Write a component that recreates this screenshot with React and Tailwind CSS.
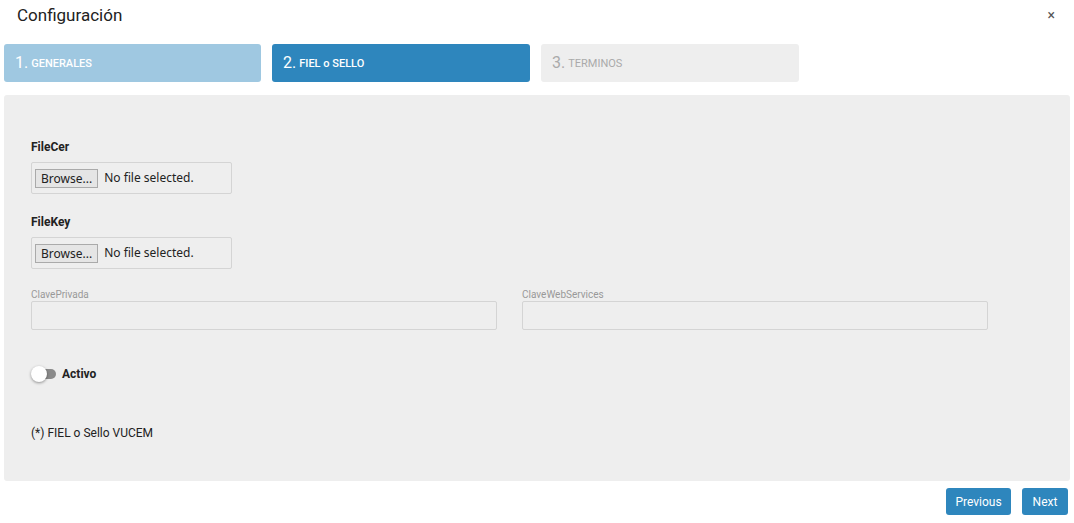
export default function App() {
  const font = { fontFamily: "Roboto, 'Liberation Sans', sans-serif" };
  const FileBox = () => (
    <div className="w-[201px] h-[32px] border border-[#d4d4d4] rounded-[2px] flex items-center pl-[3px] gap-[6px]">
      <span className="h-[19px] px-[5px] border border-[#aaa] bg-[#e5e5e5] text-[12px] leading-[17px] text-[#222]" style={{fontFamily:"'Noto Sans', sans-serif"}}>Browse...</span>
      <span className="text-[12px] text-[#222]" style={{fontFamily:"'Noto Sans', sans-serif"}}>No file selected.</span>
    </div>
  );
  return (
    <div className="w-[1074px] h-[523px] bg-white relative" style={font}>
      <div className="h-[44px] pl-[17px] pt-[3px] text-[17px] text-[#222]">Configuración</div>
      <span className="absolute right-[19px] top-[5px] text-[14px] text-[#555]">×</span>
      <div className="flex gap-[11px] px-[4px]">
        <div className="w-[257px] h-[38px] rounded-[3px] bg-[#9fc8e1] text-white flex items-center pl-[11px]"><span className="text-[16px]">1.</span><span className="text-[11px] font-medium ml-[3px] mt-[3px]">GENERALES</span></div>
        <div className="w-[258px] h-[38px] rounded-[3px] bg-[#2e86bd] text-white flex items-center pl-[11px]"><span className="text-[16px]">2.</span><span className="text-[11px] font-medium ml-[3px] mt-[3px]">FIEL o SELLO</span></div>
        <div className="w-[258px] h-[38px] rounded-[3px] bg-[#eeeeee] text-[#aaa] flex items-center pl-[11px]"><span className="text-[16px]">3.</span><span className="text-[11px] ml-[3px] mt-[3px]">TERMINOS</span></div>
      </div>
      <div className="mx-[4px] mt-[13px] h-[386px] bg-[#eeeeee] rounded-[3px] pl-[27px] pt-[45px]">
        <div className="text-[12px] font-bold text-[#222] leading-[14px]">FileCer</div>
        <div className="mt-[8px]"><FileBox /></div>
        <div className="text-[12px] font-bold text-[#222] leading-[14px] mt-[21px]">FileKey</div>
        <div className="mt-[8px]"><FileBox /></div>
        <div className="flex gap-[25px] mt-[20px]">
          <div>
            <div className="text-[10px] text-[#999] leading-[11px]">ClavePrivada</div>
            <div className="w-[466px] h-[29px] border border-[#d4d4d4] rounded-[2px] mt-[1px]"></div>
          </div>
          <div>
            <div className="text-[10px] text-[#999] leading-[11px]">ClaveWebServices</div>
            <div className="w-[466px] h-[29px] border border-[#d4d4d4] rounded-[2px] mt-[1px]"></div>
          </div>
        </div>
        <div className="flex items-center mt-[35px] gap-[6px]">
          <div className="relative w-[25px] h-[16px]">
            <div className="absolute left-[4px] top-[3px] w-[21px] h-[10px] rounded-full bg-[#8a8a8a]"></div>
            <div className="absolute left-0 top-0 w-[16px] h-[16px] rounded-full bg-white shadow-[0_1px_3px_rgba(0,0,0,0.4)]"></div>
          </div>
          <span className="text-[12px] font-bold text-[#222]">Activo</span>
        </div>
        <div className="text-[12px] text-[#222] mt-[41px]">(*) FIEL o Sello VUCEM</div>
      </div>
      <div className="flex justify-end gap-[11px] pr-[6px] mt-[7px]">
        <button className="w-[65px] h-[27px] rounded-[3px] bg-[#2e86bd] text-white text-[12px]">Previous</button>
        <button className="w-[46px] h-[27px] rounded-[3px] bg-[#2e86bd] text-white text-[12px]">Next</button>
      </div>
    </div>
  );
}
